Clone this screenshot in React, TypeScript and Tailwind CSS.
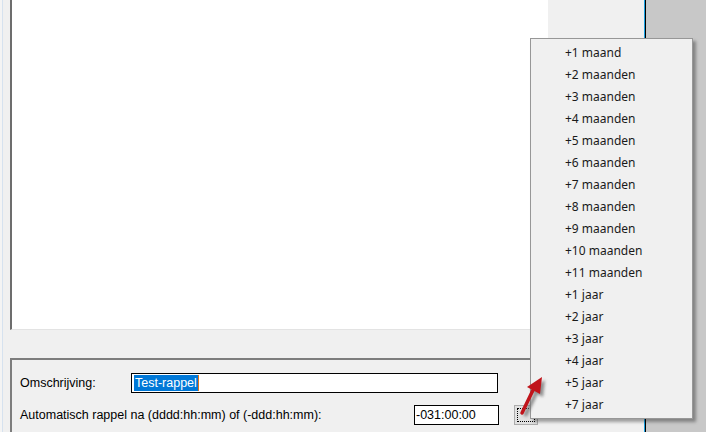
const menuItems = [
  '+1 maand',
  '+2 maanden',
  '+3 maanden',
  '+4 maanden',
  '+5 maanden',
  '+6 maanden',
  '+7 maanden',
  '+8 maanden',
  '+9 maanden',
  '+10 maanden',
  '+11 maanden',
  '+1 jaar',
  '+2 jaar',
  '+3 jaar',
  '+4 jaar',
  '+5 jaar',
  '+7 jaar',
]

function RedArrow() {
  return (
    <svg className="absolute left-[512px] top-[370px]" width="40" height="50" viewBox="0 0 40 50">
      <defs>
        <filter id="sh" x="-50%" y="-50%" width="200%" height="200%">
          <feGaussianBlur stdDeviation="1.8" />
        </filter>
      </defs>
      <g transform="translate(3,3)" opacity="0.75" filter="url(#sh)">
        <line x1="10" y1="43" x2="22" y2="18" stroke="#6e6e6e" strokeWidth="4" />
        <polygon points="30,7 15,17 28,24" fill="#6e6e6e" />
      </g>
      <line x1="10" y1="43" x2="22" y2="18" stroke="#c0141b" strokeWidth="3.5" strokeLinecap="round" />
      <polygon points="30,7 15,17 28,24" fill="#c0141b" />
    </svg>
  )
}

export default function App() {
  return (
    <div className="relative h-[432px] w-[706px] overflow-hidden bg-[#f0f0f0] font-['Liberation_Sans',Arial,sans-serif] text-[12.5px] text-black">
      <div className="flex h-full">
        {/* main window */}
        <div className="flex h-full w-[644px] shrink-0">
          <div className="h-full w-[3px] border-r border-[#d6e2ef] bg-[#f4f4f4]" />
          <div className="flex h-full flex-1 flex-col pl-[7px]">
            <div className="flex h-[330px] shrink-0">
              <div className="h-full w-[538px] border-b border-l-2 border-b-[#e3e3e3] border-l-[#6d6d6d] bg-white" />
            </div>
            <div className="mt-[28px] flex-1 border-l-2 border-t-2 border-[#7d7d7d] pl-[8px] pt-[13px]">
              <div className="flex h-[20px] items-center">
                <span className="w-[111px]">Omschrijving:</span>
                <div className="flex h-[20px] w-[367px] items-center border border-black bg-white pl-[2px]">
                  <span className="bg-[#0078d7] px-[1px] leading-[16px] text-white">Test-rappel</span>
                  <span className="h-[16px] w-px bg-[#e0731a]" />
                </div>
              </div>
              <div className="mt-[12px] flex h-[20px] items-center">
                <span className="w-[394px]">Automatisch rappel na (dddd:hh:mm) of (-ddd:hh:mm):</span>
                <div className="flex h-[20px] w-[85px] items-center border border-black bg-white pl-px">-031:00:00</div>
                <div className="ml-[15px] flex h-[20px] w-[24px] items-center justify-center border border-[#adadad] bg-[#e1e1e1]">
                  <div className="h-[14px] w-[18px] border border-dotted border-black" />
                </div>
              </div>
            </div>
          </div>
        </div>
        <div className="h-full w-px bg-[#1ba1e2]" />
        <div className="h-full w-px bg-black" />
        <div className="h-full flex-1 bg-[#c8c8c8]" />
      </div>

      {/* popup menu */}
      <div className="absolute left-[530px] top-[38px] w-[163px] border border-[#979797] bg-[#f0f0f0] pb-[2px] pt-[3px] font-['Noto_Sans',sans-serif] text-[12px] text-[#1a1a1a] shadow-[3px_3px_3px_rgba(0,0,0,0.35)]">
        {menuItems.map((item) => (
          <div key={item} className="flex h-[22px] items-center pl-[34px]">
            {item}
          </div>
        ))}
      </div>

      <RedArrow />
    </div>
  )
}
